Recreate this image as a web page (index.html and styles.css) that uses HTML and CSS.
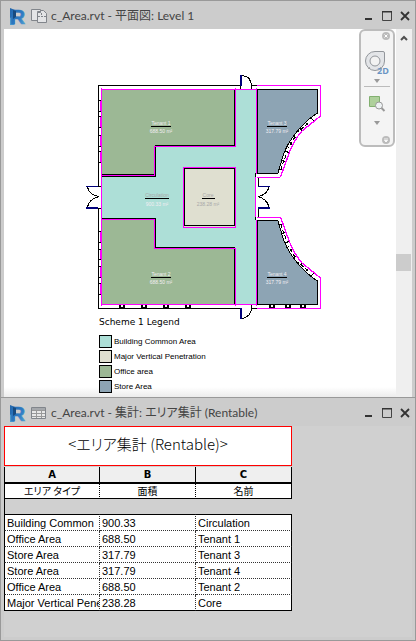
FILE: index.html
```html
<!DOCTYPE html>
<html lang="ja">
<head>
<meta charset="utf-8">
<title>c_Area.rvt</title>
<link rel="stylesheet" href="styles.css">
</head>
<body>
<svg class="defs" width="0" height="0" aria-hidden="true">
  <defs>
    <linearGradient id="blue" x1="0" y1="0" x2="1" y2="1">
      <stop offset="0" stop-color="#1f64ac"/><stop offset=".6" stop-color="#2f7cc4"/><stop offset="1" stop-color="#5aa8d4"/>
    </linearGradient>
    <symbol id="logo" viewBox="0 0 16 18">
      <path d="M0 1L5 3V15L4 18H0Z" fill="#2468ac"/>
      <path d="M0 11L5 8V16L4 18H0Z" fill="#4a9bd0"/>
      <text x="0" y="17" class="logo-letter" fill="url(#blue)" stroke="url(#blue)" stroke-width=".6">R</text>
      <path d="M3 3L6 4V10L3 12Z" fill="#174a80"/>
    </symbol>
    <symbol id="min" viewBox="0 0 12 12"><path d="M2 8h7v2h-7z" fill="#333"/></symbol>
    <symbol id="max" viewBox="0 0 12 12"><path d="M1.500 1.500h9v9h-9z" fill="none" stroke="#444"/><path d="M1 1h10v1.500h-10z" fill="#333"/></symbol>
    <symbol id="close" viewBox="0 0 12 12"><path d="M2 2l8 8M10 2l-8 8" stroke="#333" stroke-width="1.800"/></symbol>
    <g id="curved-wall" fill="none">
      <path d="M317.500 113C303 122 288 140 283 156L278 173" stroke="#000"/>
      <path d="M308 123L298 132M295 137L288 148M286 155L281 169" stroke="#000" stroke-dasharray="4 2"/>
      <path d="M311 118l4 4M305 122l4 4M299 128l4 3M293 135l4 4M289 142l4 3M285 151l5 2M282 160l4 2M279 169l5 1" stroke="#000"/>
      <path d="M320.500 116L302 131Q293 141 287 159L280.500 177" stroke="#f0f" stroke-width="1.300"/>
    </g>
  </defs>
</svg>

<section class="window">
  <header class="titlebar">
    <svg class="logo"><use href="#logo"/></svg>
    <svg class="doc" viewBox="0 0 16 14" fill="#e3e4e6" stroke="#81858b">
      <path d="M.5 .5h9v2h-3v9h-6z"/>
      <path d="M6.500 3.500h3v-2h3l3 3v9h-9z"/>
      <path d="M7 7.500h8M10.500 4v3" stroke-dasharray="2 1"/>
    </svg>
    <h1>c_Area.rvt - 平面図: Level 1</h1>
    <button aria-label="Minimize"><svg><use href="#min"/></svg></button>
    <button aria-label="Maximize"><svg><use href="#max"/></svg></button>
    <button aria-label="Close"><svg><use href="#close"/></svg></button>
  </header>

  <div class="view">
    <div class="canvas">
      <svg class="plan" viewBox="84 70 240 250" width="240" height="250" shape-rendering="crispEdges">
        <!-- area fills -->
        <path d="M102 90H256V304H102Z" fill="#addfd7"/>
        <path d="M102 90H235V146H155V175H102Z" fill="#9cb895"/>
        <path d="M102 219H155V248H235V304H102Z" fill="#9cb895"/>
        <path d="M184 168H235V227H184Z" fill="#dfdfd0"/>
        <path d="M257 90H317V113C303 122 288 140 283 156L278 173H257Z" fill="#8da4b4"/>
        <path d="M257 221H278L283 238C288 254 303 272 317 281V304H257Z" fill="#8da4b4"/>
        <g fill="none" stroke="#000">
          <!-- outer walls -->
          <path d="M98.500 186V85.500H241M240.500 85V89M251.500 89V85.500H257M98.500 208V308.500H241M251.500 304V308.500H257M98 186.500H101M98 208.500H101"/>
          <!-- partitions -->
          <path d="M102 174.500H154M102 176.500H155.500V145.500H234.500V90M102 218.500H155.500V247.500H234.500V304M184.500 226V168.500H234.500V225.500H184"/>
          <path d="M257.500 304V220.500H278M257.500 89.500H317.500V113M257.500 89V173.500H278M257 304.500H317.500V281"/>
          <path d="M255.500 173V177M258.500 177V186M258.500 208V217M255.500 217V220"/>
          <!-- window sills -->
          <path d="M98 100.500h3M98 111.500h3M98 116.500h3M98 127.500h3M98 135.500h3M98 146.500h3M98 151.500h3M98 162.500h3M98 231.500h3M98 242.500h3M98 249.500h3M98 259.500h3M98 266.500h3M98 277.500h3M98 283.500h3M98 294.500h3"/>
          <path d="M119 305h2v2h2v-2h2v3h-6zM141 305h2v2h2v-2h2v3h-6zM163 305h2v2h2v-2h2v3h-6zM185 305h2v2h2v-2h2v3h-6zM269 305h2v2h2v-2h2v3h-6zM285 305h2v2h2v-2h2v3h-6zM300 305h2v2h2v-2h2v3h-6z" fill="#000" stroke="none"/>
          <!-- door swings -->
          <path d="M242 75.500Q251 76 251.500 86M242 318.500Q251 317 251.500 308M87.500 187Q89 195 99 196.500Q89 199 87.500 207M269 187Q267 195 258 196.500Q267 199 269 207"/>
        </g>
        <g fill="none" stroke="#00007b">
          <path d="M241 75V86M241 308V319" stroke-width="2"/>
          <path d="M86 186.500H98M258 186.500H270"/>
          <path d="M86 208H98M258 208H270" stroke-width="2"/>
        </g>
        <!-- area boundary lines -->
        <g fill="none" stroke="#f0f">
          <path d="M101.500 88V306M101 89.500H257M101 304.500H257M102 175.500H154.500V146.500H235.500V88M102 219.500H154.500V248.500H235.500V306"/>
          <path d="M183.500 228V167.500H235.500V227.500H183M256.500 88V174M255.500 177V217M256.500 220V306"/>
          <path d="M257 85.500H320.500V116M257 177.500H280M257 217.500H280M257 308.500H320.500V278"/>
          <path d="M100.500 101V111M100.500 117V127M100.500 136V146M100.500 152V162M100.500 232V242M100.500 250V259M100.500 267V277M100.500 284V294"/>
        </g>
        <use href="#curved-wall"/>
        <use href="#curved-wall" transform="matrix(1 0 0 -1 0 394)"/>
        <g stroke="#000">
          <path d="M151 126.500h20M151 277.500h20M267 126.500h20M267 277.500h20M145 198.500h24M202 198.500h13"/>
        </g>
        <g class="tags" fill="#f2eef2">
          <text x="161" y="125">Tenant 1</text><text x="161" y="133">688.50 m²</text>
          <text x="161" y="276">Tenant 2</text><text x="161" y="284">688.50 m²</text>
          <text x="277" y="125">Tenant 3</text><text x="277" y="133">317.79 m²</text>
          <text x="277" y="276">Tenant 4</text><text x="277" y="284">317.79 m²</text>
          <g fill="#a8a8a8"><text x="157" y="197">Circulation</text><text x="208" y="197">Core</text></g>
          <text x="157" y="206">900.33 m²</text><text x="208" y="206" fill="#a8a8a8">238.28 m²</text>
        </g>
      </svg>
      <h2>Scheme 1 Legend</h2>
      <ul class="legend">
        <li class="common">Building Common Area</li>
        <li class="core">Major Vertical Penetration</li>
        <li class="office">Office area</li>
        <li class="store">Store Area</li>
      </ul>

      <nav class="navbar" aria-label="Navigation">
        <button class="corner" aria-label="Close navigation"><svg viewBox="0 0 10 10"><circle cx="5" cy="5" r="4" fill="#bbb"/><path d="M3.500 3.500l3 3M6.500 3.500l-3 3" stroke="#fff"/></svg></button>
        <button class="wheel" aria-label="2D steering wheel">
          <svg viewBox="0 0 26 26">
            <path d="M11 1.500H19Q20.500 1.500 20.500 3V11A9.500 9.500 0 1 1 11 1.500Z" fill="#e3e5e8" stroke="#92969b"/>
            <circle cx="11" cy="11" r="5" fill="#f2f2f2" stroke="#92969b"/>
            <path d="M6 17l-2 2M16 17l2 2" stroke="#aaa"/>
            <text x="13" y="24" class="two-d">2D</text>
          </svg>
        </button>
        <button class="caret" aria-label="Wheel options"><svg viewBox="0 0 6 4"><path d="M0 0h6L3 4z" fill="#999"/></svg></button>
        <hr>
        <button class="zoom" aria-label="Zoom region">
          <svg viewBox="0 0 18 18">
            <path d="M1.500 1.500h10v10h-10z" fill="#aed09b" stroke="#82b070"/>
            <circle cx="11" cy="10.500" r="3.500" fill="#eef2f4" stroke="#999"/>
            <path d="M13.500 13l3 3" stroke="#999" stroke-width="2"/>
          </svg>
        </button>
        <button class="caret" aria-label="Zoom options"><svg viewBox="0 0 6 4"><path d="M0 0h6L3 4z" fill="#999"/></svg></button>
        <button class="corner last" aria-label="Customize"><svg viewBox="0 0 10 10"><circle cx="5" cy="5" r="4" fill="#bbb"/><path d="M3 4h4M3.500 5.500h3L5 7z" stroke="#fff" stroke-width=".8" fill="#fff"/></svg></button>
      </nav>
    </div>
    <div class="scrollbar">
      <button aria-label="Scroll up"><svg viewBox="0 0 8 8"><path d="M1 6L4 3L7 6" fill="none" stroke="#505050" stroke-width="2"/></svg></button>
      <div class="thumb"></div>
    </div>
  </div>
</section>

<section class="window schedule">
  <header class="titlebar">
    <svg class="logo"><use href="#logo"/></svg>
    <svg class="doc" viewBox="0 0 16 14" fill="none" stroke="#81858b">
      <path d="M.5 1.500h14v11h-14z" fill="#e8e8e8"/>
      <path d="M1 3h13" stroke="#a5a8ac" stroke-width="2"/>
      <path d="M1 4.500h13M1 7.500h13M1 10.500h13M5.500 4v8M10.500 4v8" stroke="#999"/>
    </svg>
    <h1>c_Area.rvt - 集計: エリア集計 (Rentable)</h1>
    <button aria-label="Minimize"><svg><use href="#min"/></svg></button>
    <button aria-label="Maximize"><svg><use href="#max"/></svg></button>
    <button aria-label="Close"><svg><use href="#close"/></svg></button>
  </header>
  <div class="sheet">
    <table>
      <caption>&lt;エリア集計 (Rentable)&gt;</caption>
      <thead>
        <tr class="letters"><th>A</th><th>B</th><th>C</th></tr>
        <tr class="names"><th>エリア タイプ</th><th>面積</th><th>名前</th></tr>
        <tr class="spacer"><td colspan="3"></td></tr>
      </thead>
      <tbody>
        <tr><td>Building Common</td><td>900.33</td><td>Circulation</td></tr>
        <tr><td>Office Area</td><td>688.50</td><td>Tenant 1</td></tr>
        <tr><td>Store Area</td><td>317.79</td><td>Tenant 3</td></tr>
        <tr><td>Store Area</td><td>317.79</td><td>Tenant 4</td></tr>
        <tr><td>Office Area</td><td>688.50</td><td>Tenant 2</td></tr>
        <tr><td>Major Vertical Pene</td><td>238.28</td><td>Core</td></tr>
      </tbody>
    </table>
  </div>
</section>
</body>
</html>
```

FILE: styles.css
```css
*, *::before { box-sizing: border-box; }

body {
  margin: 0;
  min-height: 100vh;
  display: flex;
  flex-direction: column;
  background: #ccc;
  font-family: "Liberation Sans", "Noto Sans CJK JP", sans-serif;
  color: #000;
}

h1, h2, ul { margin: 0; padding: 0; font-weight: normal; }
.defs { position: absolute; }

button {
  padding: 0;
  border: 0;
  background: none;
  display: block;
}
button svg { display: block; width: 100%; height: 100%; }

.window {
  border: 1px solid #999;
  border-bottom: 0;
  padding: 0 3px;
  background: #ccc;
}

.titlebar {
  display: flex;
  align-items: center;
  height: 28px;
  padding: 2px 1px 0 6px;
}
.titlebar h1 {
  flex: 1;
  font: 12px/20px Lato, "Noto Sans CJK JP", sans-serif;
  font-feature-settings: "palt";
  color: #444;
  white-space: nowrap;
}
.titlebar button { width: 12px; height: 12px; margin-left: 6px; }
.logo { width: 16px; height: 18px; margin-right: 5px; }
.logo-letter { font: bold 21px "Liberation Sans", sans-serif; }
.doc { width: 16px; height: 14px; margin-right: 4px; }

.view { display: flex; background: #fff; }
.canvas {
  position: relative;
  flex: 1;
  padding: 41px 0 4px 80px;
  background: linear-gradient(to top, #ececec, #fff 10px);
}
.plan { display: block; }
.tags { font: 5px "Liberation Sans", sans-serif; text-anchor: middle; }

.canvas h2 {
  margin: -6px 0 5px 15px;
  font: 9px/16px "DejaVu Sans", sans-serif;
}
.legend { margin-left: 15px; list-style: none; display: grid; gap: 2px; }
.legend li {
  display: flex;
  align-items: center;
  gap: 2px;
  font-size: 8px;
  line-height: 13px;
}
.legend li::before {
  content: "";
  width: 13px;
  height: 13px;
  border: 1px solid #000;
}
.common::before { background: #addfd7; }
.core::before { background: #dfdfd0; }
.office::before { background: #9cb895; }
.store::before { background: #8da4b4; }

.navbar {
  position: absolute;
  top: 0;
  right: 1px;
  width: 36px;
  padding: 0 2px;
  display: flex;
  flex-direction: column;
  align-items: center;
  border: 2px solid #bcbcbc;
  border-radius: 6px;
  background: #f4f4f4;
}
.navbar hr { width: 26px; margin: 3px 0 8px; border: 0; border-top: 1px solid #bbb; }
.corner { width: 10px; height: 10px; align-self: flex-end; }
.corner.last { margin-top: 10px; }
.wheel { width: 26px; height: 26px; margin: 9px 0 3px; }
.two-d { font: bold 9px "Open Sans", sans-serif; fill: #6a94c4; }
.caret { width: 6px; height: 4px; }
.zoom { width: 18px; height: 18px; margin-bottom: 8px; }

.scrollbar { width: 16px; background: #efefef; }
.scrollbar button { width: 16px; height: 17px; padding: 4px; }
.scrollbar button svg { height: 8px; }
.thumb { height: 17px; margin: 208px 1px 0 0; background: #ccc; }

.schedule { flex: 1; border-bottom: 1px solid #999; }
.sheet { padding-bottom: 26px; background: #d0d0d0; }

table {
  width: 288px;
  table-layout: fixed;
  border-collapse: separate;
  border-spacing: 0;
  font-size: 11px;
  line-height: 14px;
}
caption {
  height: 40px;
  margin-bottom: 1px;
  border: 1px solid #f00;
  background: #fff;
  font: 15px/34px "Noto Sans CJK JP", sans-serif;
  font-weight: 300;
  font-feature-settings: "palt";
}
th, td { padding: 0; border: 0 solid #000; overflow: hidden; white-space: nowrap; }
th:first-child, td:first-child { border-left-width: 1px; }

.letters th {
  height: 17px;
  border-right-width: 1px;
  border-bottom-width: 2px;
  background: #efefef;
  font: bold 10px/14px "DejaVu Sans", sans-serif;
}
.names th {
  height: 15px;
  border-right: 1px dotted #000;
  border-bottom-width: 1px;
  background: #fff;
  font: 10px/14px "Noto Sans CJK JP", sans-serif;
  font-feature-settings: "palt";
}
.spacer td { height: 15px; }

tbody td {
  height: 16px;
  padding-left: 2px;
  border-right: 1px dotted #333;
  border-bottom: 1px dotted #333;
  background: #fff;
}
tbody tr:first-child td { height: 17px; border-top-width: 1px; }
tbody tr:last-child td { border-bottom: 1px solid #000; }
.names th:last-child, tbody td:last-child { border-right: 1px solid #000; }
```
